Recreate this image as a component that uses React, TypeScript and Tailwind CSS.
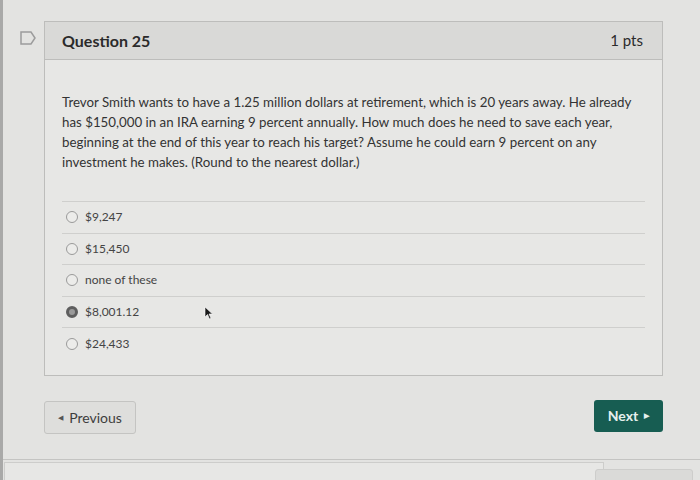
const answers = [
  { label: "$9,247", checked: false },
  { label: "$15,450", checked: false },
  { label: "none of these", checked: false },
  { label: "$8,001.12", checked: true },
  { label: "$24,433", checked: false },
];

function Radio({ checked }: { checked: boolean }) {
  if (checked) {
    return <span className="h-[12px] w-[12px] rounded-full border-[3px] border-[#5e5e5e] bg-[#9a9a9a]" />;
  }
  return <span className="h-[12px] w-[12px] rounded-full border border-[#9a9a9a] bg-[#ececea]" />;
}

export default function App() {
  return (
    <div
      className="relative h-[480px] w-[700px] overflow-hidden bg-[#e3e3e1] text-[#2d3b45]"
      style={{ fontFamily: "Lato, 'Open Sans', sans-serif" }}
    >
      <div className="absolute left-0 top-0 h-full w-[3px] bg-[#a9a9a8]" />

      <div className="flex pl-[20px] pt-[21px]">
        {/* bookmark flag */}
        <div className="w-[24px] pt-[10px]">
          <svg width="16" height="14" viewBox="0 0 16 14">
            <path d="M1 1 H11 L15 7 L11 13 H1 Z" fill="none" stroke="#9c9c9c" strokeWidth="1.5" />
          </svg>
        </div>

        <div className="w-[619px] border border-[#bdbdbb] bg-[#e7e7e5]">
          <div className="flex h-[38px] items-center justify-between border-b border-[#bdbdbb] bg-[#d9d9d7] pl-[17px] pr-[19px]">
            <span className="text-[16px] font-bold text-[#2b2b2b]">Question 25</span>
            <span className="text-[15px] text-[#2b2b2b]">1 pts</span>
          </div>

          <div className="px-[17px] pt-[32px]">
            <p className="w-[575px] text-[13.3px] leading-[20px] text-[#333]">
              Trevor Smith wants to have a 1.25 million dollars at retirement, which is 20 years away. He already
              has $150,000 in an IRA earning 9 percent annually. How much does he need to save each year,
              beginning at the end of this year to reach his target? Assume he could earn 9 percent on any
              investment he makes. (Round to the nearest dollar.)
            </p>

            <div className="mt-[29px] border-t border-[#cfcfcd] pb-[15px]">
              {answers.map((a, i) => (
                <div
                  key={a.label}
                  className={`relative flex h-[31.5px] items-center gap-[7px] pl-[4px] ${
                    i < answers.length - 1 ? "border-b border-[#cfcfcd]" : ""
                  }`}
                >
                  <Radio checked={a.checked} />
                  <span className="text-[12px] text-[#444]">{a.label}</span>
                  {a.checked && (
                    <svg
                      className="absolute left-[142px] top-[9px]"
                      width="10"
                      height="14"
                      viewBox="0 0 10 14"
                    >
                      <path d="M1 1 L1 11 L3.5 8.5 L5.5 13 L7 12.3 L5 8 L8.5 8 Z" fill="#1a1a1a" stroke="#fff" strokeWidth="0.6" />
                    </svg>
                  )}
                </div>
              ))}
            </div>
          </div>
        </div>
      </div>

      <div className="ml-[44px] mt-[25px] flex w-[619px] items-start justify-between">
        <button className="flex h-[33px] w-[92px] items-center justify-center gap-[6px] rounded-[3px] border border-[#c4c4c2] bg-[#dededc] text-[14px] text-[#3d3d3d]">
          <span className="text-[7px] text-[#555]">◀</span>
          Previous
        </button>
        <button className="mt-[-1px] flex h-[32px] w-[69px] items-center justify-center gap-[6px] rounded-[3px] bg-[#175d52] text-[14px] font-bold text-[#e6f0ee]">
          Next
          <span className="text-[7px]">▶</span>
        </button>
      </div>

      <div className="mt-[25px] flex border-t border-[#c4c4c2]">
        <div className="ml-[4px] mt-[2px] h-[20px] w-[600px] border border-[#cdcdcb] bg-[#e7e7e5]" />
      </div>
      <div className="absolute left-[595px] top-[469px] h-[20px] w-[98px] rounded-[3px] border border-[#cdcdcb] bg-[#dadad8]" />
    </div>
  );
}
